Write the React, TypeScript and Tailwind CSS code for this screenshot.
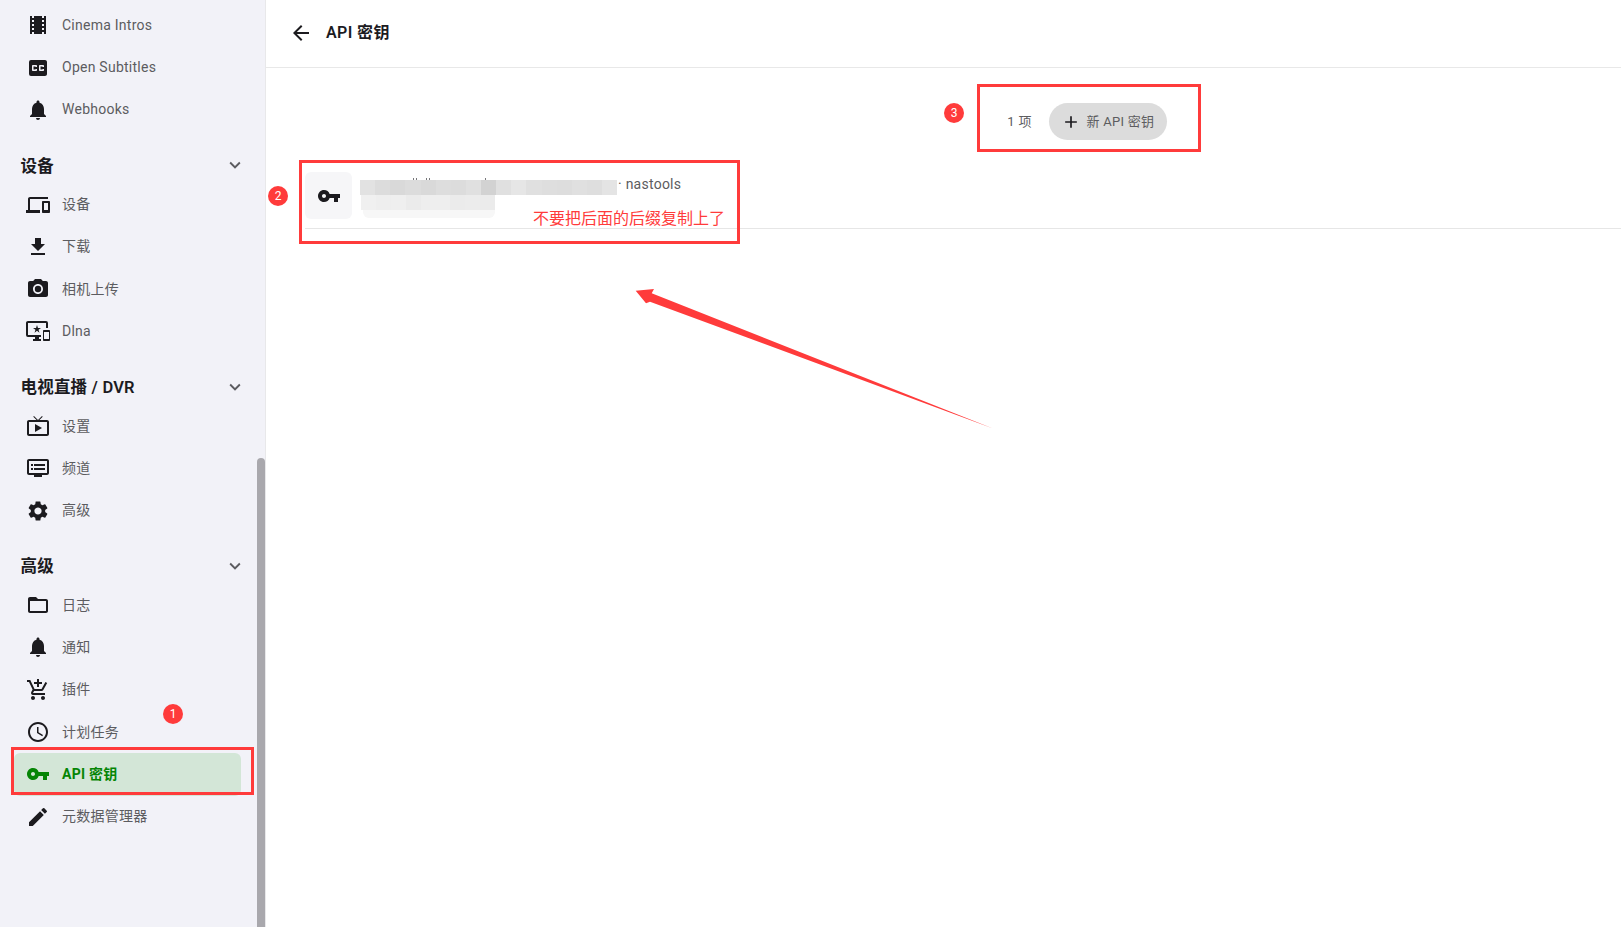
import type { ReactNode } from "react"
import {
  MdAccessTime,
  MdAdd,
  MdArrowBack,
  MdCameraAlt,
  MdClosedCaption,
  MdDevices,
  MdDvr,
  MdEdit,
  MdExpandMore,
  MdFileDownload,
  MdFolderOpen,
  MdNotifications,
  MdOutlineAddShoppingCart,
  MdOutlineImportantDevices,
  MdOutlineLiveTv,
  MdSettings,
  MdTheaters,
  MdVpnKey,
} from "react-icons/md"

const FONT = "font-['Roboto','Noto_Sans_CJK_SC',sans-serif]"

const firstItems = [
  { icon: <MdTheaters />, label: "Cinema Intros" },
  { icon: <MdClosedCaption />, label: "Open Subtitles" },
  { icon: <MdNotifications />, label: "Webhooks" },
]

const groups = [
  {
    title: "设备",
    items: [
      { icon: <MdDevices />, label: "设备" },
      { icon: <MdFileDownload />, label: "下载" },
      { icon: <MdCameraAlt />, label: "相机上传" },
      { icon: <MdOutlineImportantDevices />, label: "Dlna" },
    ],
  },
  {
    title: "电视直播 / DVR",
    items: [
      { icon: <MdOutlineLiveTv />, label: "设置" },
      { icon: <MdDvr />, label: "频道" },
      { icon: <MdSettings />, label: "高级" },
    ],
  },
  {
    title: "高级",
    items: [
      { icon: <MdFolderOpen />, label: "日志" },
      { icon: <MdNotifications />, label: "通知" },
      { icon: <MdOutlineAddShoppingCart />, label: "插件" },
      { icon: <MdAccessTime />, label: "计划任务" },
      { icon: <MdVpnKey />, label: "API 密钥", active: true },
      { icon: <MdEdit />, label: "元数据管理器" },
    ],
  },
]

// pixelated smear over the hidden key text
const mosaicTop = ["#e2e2e2", "#dcdcdc", "#d9d9d9", "#dcdcdc", "#d9d9d9", "#dddddd", "#dcdcdc", "#e0e0e0", "#d2d2d2", "#e0e0e0", "#e6e6e6", "#e0e0e0", "#dedede", "#dddddd", "#e0e0e0", "#dedede", "#e4e4e4"]
const mosaicBottom = ["#f0f0f0", "#eeeeee", "#efefef", "#ebebeb", "#eeeeee", "#eeeeee", "#ebebeb", "#ececec", "#ebebeb"]
// bits of the key text that stick out above the smear
const keyTicks = [53, 56, 66, 69, 125]

function NavRow({ icon, label, active }: { icon: ReactNode; label: string; active?: boolean }) {
  return (
    <div
      className={
        active
          ? "flex h-[42.3px] items-center rounded-md bg-[#d3e6d7] pl-[12px] text-[#058505]"
          : "flex h-[42.3px] items-center pl-[12px] text-[#5c5c60]"
      }
    >
      <span className={active ? "flex w-[36px] text-[24px] text-[#058505]" : "flex w-[36px] text-[24px] text-[#1c1b1f]"}>
        {icon}
      </span>
      <span className={active ? "text-[14px] font-bold tracking-[0.25px]" : "text-[14px] tracking-[0.25px]"}>{label}</span>
    </div>
  )
}

function Badge({ n, className }: { n: number; className: string }) {
  return (
    <span
      className={`absolute flex h-[20px] w-[20px] items-center justify-center rounded-full bg-[#ff3b3b] text-[12px] text-white ${className}`}
    >
      {n}
    </span>
  )
}

export default function App() {
  return (
    <div className={`relative flex h-[927px] w-[1621px] overflow-hidden bg-white ${FONT}`}>
      <aside className="w-[266px] shrink-0 border-r border-[#e8e8ea] bg-[#f2f2f8] pl-[14px] pt-[4.2px]">
        <div className="w-[227px]">
          {firstItems.map((item) => (
            <NavRow key={item.label} icon={item.icon} label={item.label} />
          ))}
          {groups.map((group) => (
            <section key={group.title} className="mt-[16.3px]">
              <div className="-mr-[5px] ml-[6.5px] flex h-[36px] items-center justify-between text-[16.5px] font-semibold tracking-[0.2px] text-[#1c1b1f]">
                <span className="mt-[3px]">{group.title}</span>
                <MdExpandMore className="text-[22px] text-[#5c5c60]" />
              </div>
              {group.items.map((item) => (
                <NavRow key={item.label} icon={item.icon} label={item.label} active={"active" in item} />
              ))}
            </section>
          ))}
        </div>
      </aside>

      <main className="min-w-0 flex-1">
        <header className="flex h-[68px] items-center border-b border-[#e8e8e8] pb-[2px] pl-[23px] text-[#1c1b1f]">
          <MdArrowBack className="mr-[13px] text-[24px]" />
          <h1 className="text-[16px] font-semibold tracking-[0.4px]">API 密钥</h1>
        </header>

        <div className="flex items-center justify-end pr-[454px] pt-[35px]">
          <span className="mr-[17px] text-[13px] tracking-[0.4px] text-[#5c5c60]">1 项</span>
          <button className="flex h-[37px] w-[118px] items-center rounded-full bg-[#dcdcdc] pl-[12px] text-[13px] tracking-[0.25px] text-[#5c5c60]">
            <MdAdd className="mr-[5.5px] text-[20px] text-[#1c1b1f]" />
            新 API 密钥
          </button>
        </div>

        <div className="ml-[39px] mt-[32px] flex h-[57px] items-start border-b border-[#e6e6e6]">
          <div className="flex h-[47px] w-[47px] items-center justify-center rounded-md bg-[#f6f6f8] text-[24px] text-[#1c1b1f]">
            <MdVpnKey />
          </div>
          <div className="relative ml-[8px] h-[47px] flex-1">
            {keyTicks.map((x) => (
              <span key={x} className="absolute top-[6px] h-[2px] w-[1px] bg-[#77777a]" style={{ left: x }} />
            ))}
            <div className="absolute left-0 top-[8px] flex h-[15px] w-[257px] blur-[0.5px]">
              {mosaicTop.map((c, i) => (
                <span key={i} className="flex-1" style={{ backgroundColor: c }} />
              ))}
            </div>
            <div className="absolute left-[1px] top-[23px] flex h-[15px] w-[134px] blur-[0.5px]">
              {mosaicBottom.map((c, i) => (
                <span key={i} className="flex-1" style={{ backgroundColor: c }} />
              ))}
            </div>
            <div className="absolute left-[3px] top-[38px] h-[8px] w-[132px] rounded-b-md bg-[#f7f7f7] blur-[0.5px]" />
            <span className="absolute left-[258px] top-[2px] text-[14px] tracking-[0.25px] text-[#5c5c60]">· nastools</span>
          </div>
        </div>
      </main>

      {/* scrollbar */}
      <div className="absolute bottom-0 left-[257px] top-[458px] w-[8px] rounded-t bg-[#a9a8ad]" />

      {/* screenshot annotations */}
      <div className="absolute left-[11px] top-[747px] h-[48px] w-[243px] border-[3px] border-[#ff3b3b]" />
      <div className="absolute left-[299px] top-[160px] h-[84px] w-[441px] border-[3px] border-[#ff3b3b]" />
      <div className="absolute left-[977px] top-[84px] h-[68px] w-[224px] border-[3px] border-[#ff3b3b]" />
      <Badge n={1} className="left-[163px] top-[704px]" />
      <Badge n={2} className="left-[268px] top-[186px]" />
      <Badge n={3} className="left-[944px] top-[103px]" />
      <span className="absolute left-[533px] top-[208px] text-[16px] leading-[22px] text-[#ff3b3b]">不要把后面的后缀复制上了</span>
      <svg className="absolute left-[630px] top-[285px]" width="368" height="148" viewBox="630 285 368 148">
        <polygon
          points="635.7,290.7 654,289 651.7,293.3 993,428.5 650,301.7 646,303.3"
          fill="#ff3b3b"
        />
      </svg>
    </div>
  )
}
